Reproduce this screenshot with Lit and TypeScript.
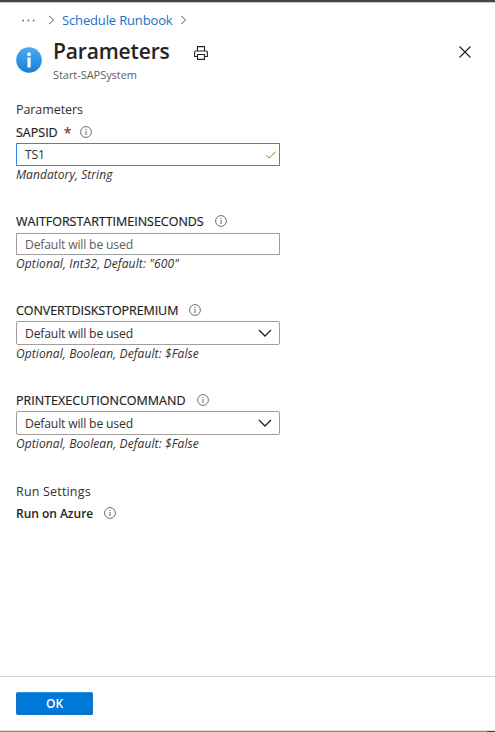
import { LitElement, html, css } from "lit";
import { customElement, property } from "lit/decorators.js";
import { styleMap } from "lit/directives/style-map.js";

@customElement("info-glyph")
class InfoGlyph extends LitElement {
  static styles = css`
    :host { display: block; width: 12px; height: 12px; flex: none; }
    svg { display: block; }
  `;
  render() {
    return html`<svg width="12" height="12" viewBox="0 0 12 12" fill="none" stroke="#605e5c">
      <circle cx="6" cy="6" r="5.4" stroke-width=".9" />
      <path d="M6 5v4M6 2.9v1.1" stroke-width="1" />
    </svg>`;
  }
}

interface Field {
  name: string;
  value: string;
  hint: string;
  kind: "text" | "valid" | "select";
  required?: boolean;
  tracking: { name: number; value: number; hint: number };
}

const FIELDS: Field[] = [
  { name: "SAPSID", value: "TS1", hint: "Mandatory, String", kind: "valid", required: true, tracking: { name: 0, value: -0.15, hint: 0.06 } },
  { name: "WAITFORSTARTTIMEINSECONDS", value: "Default will be used", hint: 'Optional, Int32, Default: "600"', kind: "text", tracking: { name: -0.02, value: -0.18, hint: 0.12 } },
  { name: "CONVERTDISKSTOPREMIUM", value: "Default will be used", hint: "Optional, Boolean, Default: $False", kind: "select", tracking: { name: -0.07, value: -0.18, hint: 0.1 } },
  { name: "PRINTEXECUTIONCOMMAND", value: "Default will be used", hint: "Optional, Boolean, Default: $False", kind: "select", tracking: { name: 0.02, value: -0.18, hint: 0.1 } },
];

const spacing = (px: number) => styleMap({ letterSpacing: `${px}px` });

@customElement("param-field")
class ParamField extends LitElement {
  @property({ attribute: false }) field!: Field;

  static styles = css`
    :host { display: block; width: 264px; color: #323130; }
    .label { display: flex; align-items: center; height: 20px; font-size: 12.5px; color: #201f1e; white-space: nowrap; -webkit-text-stroke: 0.2px #201f1e; }
    .star { color: #a4262c; margin-left: 6px; font-size: 14px; -webkit-text-stroke-color: #a4262c; }
    info-glyph { margin-left: 11px; }
    .required info-glyph { margin-left: 9px; }
    .box { box-sizing: border-box; display: flex; align-items: center; justify-content: space-between; border: 1px solid #a19f9d; padding: 0 7px 0 8px; font-size: 12.2px; white-space: nowrap; }
    .text { height: 22px; margin-top: 2px; color: #605e5c; }
    .valid { height: 23px; margin-top: 1px; border-color: #2e8bdc; padding-right: 3px; }
    .select { height: 24px; margin-top: 1px; border-radius: 2px; }
    .hint { height: 18px; line-height: 18px; font-style: italic; font-size: 12px; white-space: nowrap; }
    svg { display: block; }
  `;

  private adornment() {
    if (this.field.kind === "select")
      return html`<svg width="14" height="8" viewBox="0 0 14 8" fill="none" stroke="#201f1e" stroke-width="1.3"><path d="M1 1l6 6 6-6" /></svg>`;
    if (this.field.kind === "valid")
      return html`<svg width="10" height="8" viewBox="0 0 10 8" fill="none" stroke="#57a300"><path d="M.4 4.2l2.8 2.8L9.6.8" /></svg>`;
    return "";
  }

  render() {
    const f = this.field;
    return html`
      <div class="label ${f.required ? "required" : ""}">
        <span style=${spacing(f.tracking.name)}>${f.name}</span>
        ${f.required ? html`<span class="star">*</span>` : ""}
        <info-glyph></info-glyph>
      </div>
      <div class="box ${f.kind}">
        <span style=${spacing(f.tracking.value)}>${f.value}</span>
        ${this.adornment()}
      </div>
      <div class="hint" style=${spacing(f.tracking.hint)}>${f.hint}</div>
    `;
  }
}

@customElement("app-root")
class AppRoot extends LitElement {
  static styles = css`
    :host { display: block; font-family: "Open Sans", "Noto Sans", sans-serif; color: #323130; }
    svg { display: block; flex: none; }
    .page { box-sizing: border-box; width: 495px; height: 732px; background: #fff; border-top: 2px solid #484644; display: flex; flex-direction: column; white-space: nowrap; overflow: hidden; }
    .edge { height: 1px; background: #c8c6c4; flex: none; }
    .crumbs { display: flex; align-items: center; height: 20px; margin-top: 7px; padding-left: 22px; font-size: 13px; letter-spacing: -0.15px; color: #1a6fc9; }
    .dots { margin-right: 13px; }
    .crumbs .link { margin: 0 7px 0 7px; }
    .head { display: flex; height: 54px; margin-top: 6px; padding: 0 24px 0 16px; }
    .badge { margin-top: 11px; }
    .titles { margin-left: 11px; }
    h1 { margin: 0; height: 30px; line-height: 30px; font-size: 21px; font-weight: 600; letter-spacing: -0.15px; color: #252423; }
    .sub { height: 16px; line-height: 16px; margin-top: 1px; font-size: 11px; letter-spacing: -0.05px; color: #605e5c; }
    .print { margin: 10px 0 0 24px; }
    .close { margin: 10px 0 0 auto; }
    .main { flex: 1; padding-left: 16px; }
    .section { height: 20px; line-height: 20px; margin-top: 10px; font-size: 12.5px; letter-spacing: -0.08px; }
    .fields { display: flex; flex-direction: column; gap: 27px; margin-top: 2px; }
    .run { margin-top: 29px; letter-spacing: 0.18px; }
    .azure { display: flex; align-items: center; height: 20px; margin-top: 1px; gap: 11px; font-size: 12px; letter-spacing: -0.02px; font-weight: 600; color: #252423; }
    .foot { box-sizing: border-box; height: 54px; border-top: 1px solid #d8d6d4; padding: 15px 0 0 16px; flex: none; }
    button { display: block; width: 77px; height: 23px; padding: 0; border: 1px solid #0f6fc9; border-top-color: #2b8fe0; border-radius: 2px; background: #0078d7; color: #fff; font: 600 12px "Open Sans", sans-serif; }
    .bottom { display: flex; flex: none; height: 2px; box-sizing: border-box; border-top: 1px solid #e1dfdd; background: #8a8886; }
    .corner { width: 8px; margin-left: auto; background: #174a7c; }
  `;

  private chevron() {
    return html`<svg width="7" height="10" viewBox="0 0 7 10" fill="none" stroke="#605e5c"><path d="M1 .8L5.6 5 1 9.2" /></svg>`;
  }

  render() {
    return html`
      <div class="page">
        <div class="edge"></div>
        <nav class="crumbs">
          <svg class="dots" width="13" height="3" viewBox="0 0 13 3" fill="#44719f"><circle cx="1.2" cy="1.5" r=".9" /><circle cx="6.4" cy="1.5" r=".9" /><circle cx="11.6" cy="1.5" r=".9" /></svg>
          ${this.chevron()}<span class="link">Schedule Runbook</span>${this.chevron()}
        </nav>
        <header class="head">
          <svg class="badge" width="26" height="26" viewBox="0 0 26 26">
            <defs><linearGradient id="g" x1="0" y1="0" x2="0" y2="1"><stop offset="0" stop-color="#4fa9ee" /><stop offset="1" stop-color="#1680d8" /></linearGradient></defs>
            <circle cx="13" cy="13" r="12.8" fill="url(#g)" />
            <circle cx="13" cy="7.2" r="1.9" fill="#fff" /><rect x="11.4" y="10.5" width="3.2" height="10" rx=".6" fill="#fff" />
          </svg>
          <div class="titles">
            <h1>Parameters</h1>
            <div class="sub">Start-SAPSystem</div>
          </div>
          <svg class="print" width="14" height="14" viewBox="0 0 14 14" fill="none" stroke="#252423" stroke-width="1.1">
            <path d="M3.5 5V.6h7V5M3.5 10.5H.6V6.2q0-1.2 1.2-1.2h10.4q1.2 0 1.2 1.2v4.3h-2.9M3.5 8.5h7v4.9h-7z" />
          </svg>
          <svg class="close" width="12" height="12" viewBox="0 0 12 12" stroke="#201f1e" stroke-width="1.1"><path d="M.5.5l11 11M11.5.5l-11 11" /></svg>
        </header>
        <main class="main">
          <div class="section">Parameters</div>
          <div class="fields">
            ${FIELDS.map((f) => html`<param-field .field=${f}></param-field>`)}
          </div>
          <div class="section run">Run Settings</div>
          <div class="azure">Run on Azure<info-glyph></info-glyph></div>
        </main>
        <footer class="foot"><button>OK</button></footer>
        <div class="bottom"><div class="corner"></div></div>
      </div>
    `;
  }
}
